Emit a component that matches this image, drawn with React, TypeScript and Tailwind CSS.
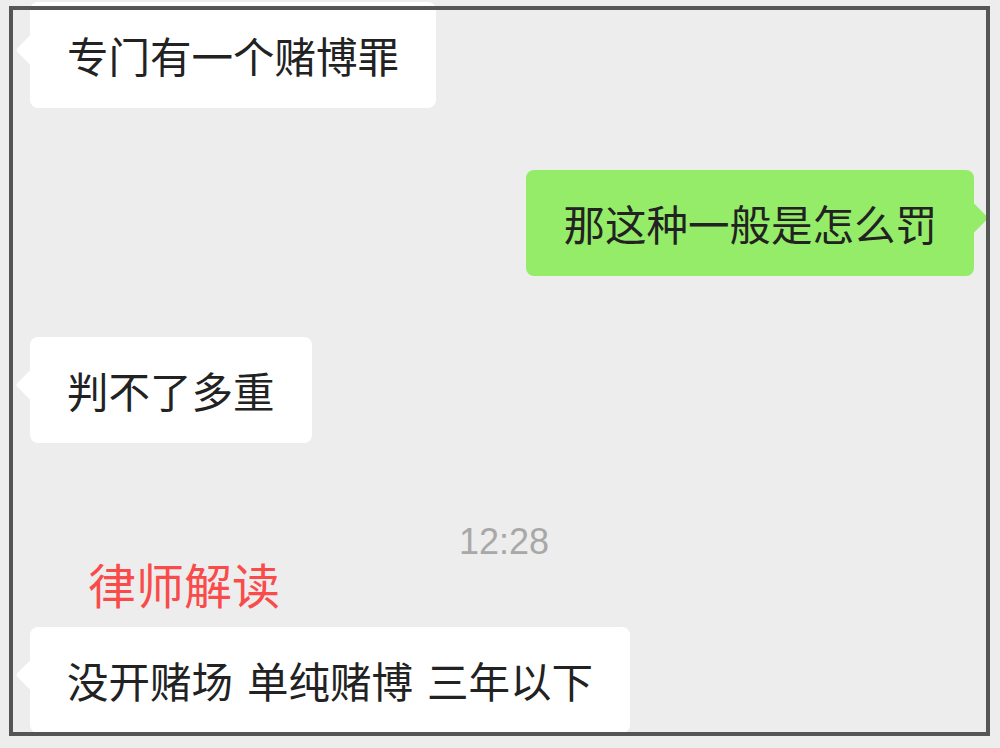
const cjk = { fontFamily: '"Noto Sans CJK SC", "Noto Sans", sans-serif' }

type BubbleProps = {
  text: React.ReactNode
  side: 'left' | 'right'
  className?: string
}

function Bubble({ text, side, className = '' }: BubbleProps) {
  const isLeft = side === 'left'
  return (
    <div className={`relative ${className}`}>
      <div
        className={`absolute top-[37px] h-[22px] w-[22px] rotate-45 rounded-[3px] ${
          isLeft ? 'left-[-10px] bg-white' : 'right-[-10px] bg-[#95ec69]'
        }`}
      />
      <div
        className={`relative rounded-[8px] px-[37px] py-[27px] text-[41.5px] leading-[52px] text-[#222222] ${
          isLeft ? 'bg-white' : 'bg-[#95ec69]'
        }`}
        style={cjk}
      >
        {text}
      </div>
    </div>
  )
}

export default function App() {
  return (
    <div className="relative h-[748px] w-[1000px] overflow-hidden bg-[#ededed]">
      <div className="flex flex-col pt-[2px]">
        <Bubble side="left" text="专门有一个赌博罪" className="ml-[30px] self-start" />
        <Bubble side="right" text="那这种一般是怎么罚" className="mr-[26px] mt-[62px] self-end" />
        <Bubble side="left" text="判不了多重" className="ml-[30px] mt-[61px] self-start" />
        <div
          className="mt-[82px] pl-[8px] text-center text-[36px] leading-[34px] text-[#a8a8a8]"
          style={{ fontFamily: '"Liberation Sans", Arial, sans-serif' }}
        >
          12:28
        </div>
        <div className="ml-[88px] text-[48px] leading-[48px] text-[#fa4b4b]" style={cjk}>
          律师解读
        </div>
        <Bubble
          side="left"
          className="ml-[30px] mt-[20px] self-start"
          text={
            <>
              没开赌场<span className="inline-block w-[14px]" />单纯赌博<span className="inline-block w-[14px]" />三年以下
            </>
          }
        />
      </div>
      {/* frame drawn over the screenshot */}
      <div className="pointer-events-none absolute left-[9px] top-[6px] h-[730px] w-[981px] border-4 border-[#555555]" />
    </div>
  )
}
